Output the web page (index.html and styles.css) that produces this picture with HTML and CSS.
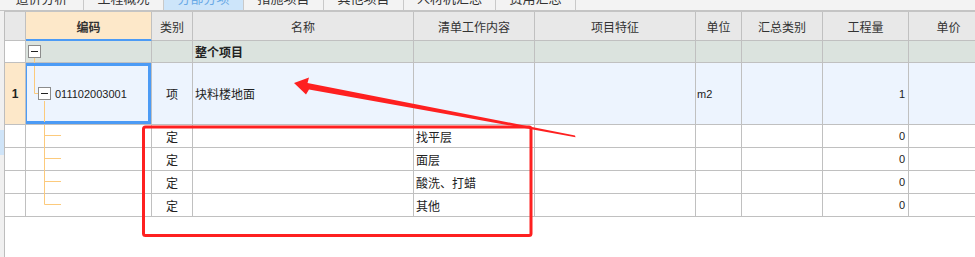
FILE: index.html
```html
<!DOCTYPE html>
<html lang="zh-CN">
  <head>
    <meta charset="UTF-8" />
    <meta name="viewport" content="width=device-width, initial-scale=1.0" />
    <title>分部分项</title>
    <link rel="stylesheet" href="styles.css">
  </head>
  <body>
    <div class="screen">
      <div class="tabs">
        <div class="tab first">造价分析</div>
        <div class="tab">工程概况</div>
        <div class="tab active">分部分项</div>
        <div class="tab">措施项目</div>
        <div class="tab">其他项目</div>
        <div class="tab wide">人材机汇总</div>
        <div class="tab">费用汇总</div>
      </div>
      <div class="page">
        <div class="rail"><span class="rail-mark"></span></div>
        <div class="sheet">
          <div class="row head">
            <div class="cell"></div>
            <div class="cell code-head">编码</div>
            <div class="cell">类别</div>
            <div class="cell">名称</div>
            <div class="cell">清单工作内容</div>
            <div class="cell">项目特征</div>
            <div class="cell">单位</div>
            <div class="cell">汇总类别</div>
            <div class="cell">工程量</div>
            <div class="cell">单价</div>
          </div>
          <div class="row group">
            <div class="cell num blank"></div>
            <div class="cell code"><span class="fold"></span></div>
            <div class="cell"></div>
            <div class="cell name strong">整个项目</div>
            <div class="cell"></div>
            <div class="cell"></div>
            <div class="cell"></div>
            <div class="cell"></div>
            <div class="cell"></div>
            <div class="cell"></div>
          </div>
          <div class="row item">
            <div class="cell num sel">1</div>
            <div class="cell code sub current"><span class="fold"></span><span class="code-num">011102003001</span></div>
            <div class="cell mid">项</div>
            <div class="cell name">块料楼地面</div>
            <div class="cell"></div>
            <div class="cell"></div>
            <div class="cell unit">m2</div>
            <div class="cell"></div>
            <div class="cell qty">1</div>
            <div class="cell"></div>
          </div>
          <div class="row quota">
            <div class="cell num blank"></div>
            <div class="cell code"></div>
            <div class="cell mid">定</div>
            <div class="cell name"></div>
            <div class="cell name">找平层</div>
            <div class="cell"></div>
            <div class="cell"></div>
            <div class="cell"></div>
            <div class="cell qty">0</div>
            <div class="cell"></div>
          </div>
          <div class="row quota">
            <div class="cell num blank"></div>
            <div class="cell code"></div>
            <div class="cell mid">定</div>
            <div class="cell name"></div>
            <div class="cell name">面层</div>
            <div class="cell"></div>
            <div class="cell"></div>
            <div class="cell"></div>
            <div class="cell qty">0</div>
            <div class="cell"></div>
          </div>
          <div class="row quota">
            <div class="cell num blank"></div>
            <div class="cell code"></div>
            <div class="cell mid">定</div>
            <div class="cell name"></div>
            <div class="cell name">酸洗、打蜡</div>
            <div class="cell"></div>
            <div class="cell"></div>
            <div class="cell"></div>
            <div class="cell qty">0</div>
            <div class="cell"></div>
          </div>
          <div class="row quota">
            <div class="cell num blank"></div>
            <div class="cell code"></div>
            <div class="cell mid">定</div>
            <div class="cell name"></div>
            <div class="cell name">其他</div>
            <div class="cell"></div>
            <div class="cell"></div>
            <div class="cell"></div>
            <div class="cell qty">0</div>
            <div class="cell"></div>
          </div>
        </div>
      </div>
      <!-- tree connectors and the red review marks sit over the grid -->
      <svg class="marks" width="975" height="257" viewBox="0 0 975 257">
        <path d="M34.5 58V63M34.5 66V93.5H38M44.5 101V122M44.5 125V204.5M44.5 135.5H61M44.5 158.5H61M44.5 181.5H61M44.5 204.5H61" stroke="#fcca7c" stroke-width="1" fill="none" />
        <rect x="143.5" y="127" width="387.5" height="108.5" rx="2" fill="none" stroke="#fe2020" stroke-width="3" />
        <polygon points="294,83 309,77.5 307.5,83 575,135.5 575.5,137.2 309,89.5 306,94.5" fill="#fe2020" />
      </svg>
    </div>
  </body>
</html>
```

FILE: styles.css
```css
* {
  margin: 0;
  padding: 0;
  box-sizing: border-box;
}
body {
  font-family: "Liberation Sans", "Noto Sans CJK SC", sans-serif;
  font-size: 12px;
  color: #222;
  background: #fff;
  overflow: hidden;
}
.screen {
  position: relative;
  width: 975px;
  height: 257px;
  overflow: hidden;
}
.tabs {
  display: flex;
  height: 11px;
  background: #f3f3f3;
  border-bottom: 1px solid #c4c4c4;
  overflow: hidden;
}
.tab {
  flex: none;
  width: 80px;
  height: 23px;
  margin-top: -13px;
  line-height: 23px;
  text-align: center;
  border-right: 1px solid #c9c9c9;
  color: #333;
  font-size: 13px;
}
.tab.first {
  width: 84px;
}
.tab.wide {
  width: 92px;
}
.tab.active {
  background: #cde5fa;
  color: #6aaae6;
}
.page {
  display: flex;
  height: 246px;
}
.rail {
  flex: none;
  width: 4px;
  background: #f0f0f0;
  padding-top: 119px;
}
.rail-mark {
  display: block;
  height: 25px;
  background: #cfe4f8;
}
.sheet {
  flex: 1;
  border-left: 1px solid #bdbdbd;
  border-top: 1px solid #c4c4c4;
}
.row {
  display: grid;
  grid-template-columns: 21px 126px 41px 221px 121px 161px 46px 81px 86px 80px;
}
.cell {
  display: flex;
  align-items: center;
  padding: 0 2px;
  border-right: 1px solid #c0c0c0;
  border-bottom: 1px solid #c0c0c0;
  overflow: hidden;
  white-space: nowrap;
}
.head {
  height: 29px;
  background: #e8e8e8;
}
.head .cell {
  justify-content: center;
  color: #333;
}
.head .code-head {
  background: #fde8c9;
  font-weight: bold;
  border-bottom-color: #4c9bf5;
  box-shadow: inset 0 -1px 0 #4c9bf5;
}
.group {
  height: 22px;
  background: #dbe3de;
}
.item {
  height: 62px;
  background: #edf4fe;
}
.quota {
  height: 23px;
  background: #fff;
}
.num {
  justify-content: center;
  font-weight: bold;
  padding: 0;
}
.num.blank {
  background: #fff;
}
.num.sel {
  background: #fde8c9;
}
.strong {
  font-weight: bold;
}
.mid {
  justify-content: center;
}
.qty {
  justify-content: flex-end;
  padding-right: 3px;
  font-size: 11px;
}
.unit {
  padding-left: 1px;
  font-size: 11px;
}
.code {
  padding-left: 2px;
}
.code.sub {
  padding-left: 12px;
}
.code-num {
  font-size: 11px;
  color: #222;
}
.fold {
  position: relative;
  flex: none;
  width: 13px;
  height: 13px;
  margin-right: 4px;
  border: 1px solid #8c8c8c;
  background: #fff;
}
.fold::before {
  content: "";
  position: absolute;
  left: 2px;
  right: 2px;
  top: 5px;
  height: 1px;
  background: #222;
}
.current {
  position: relative;
}
.current::after {
  content: "";
  position: absolute;
  left: -2px;
  top: 0;
  right: 0;
  bottom: 0;
  border: 3px solid #4c9bf5;
}
.marks {
  position: absolute;
  left: 0;
  top: 0;
  pointer-events: none;
}
```
